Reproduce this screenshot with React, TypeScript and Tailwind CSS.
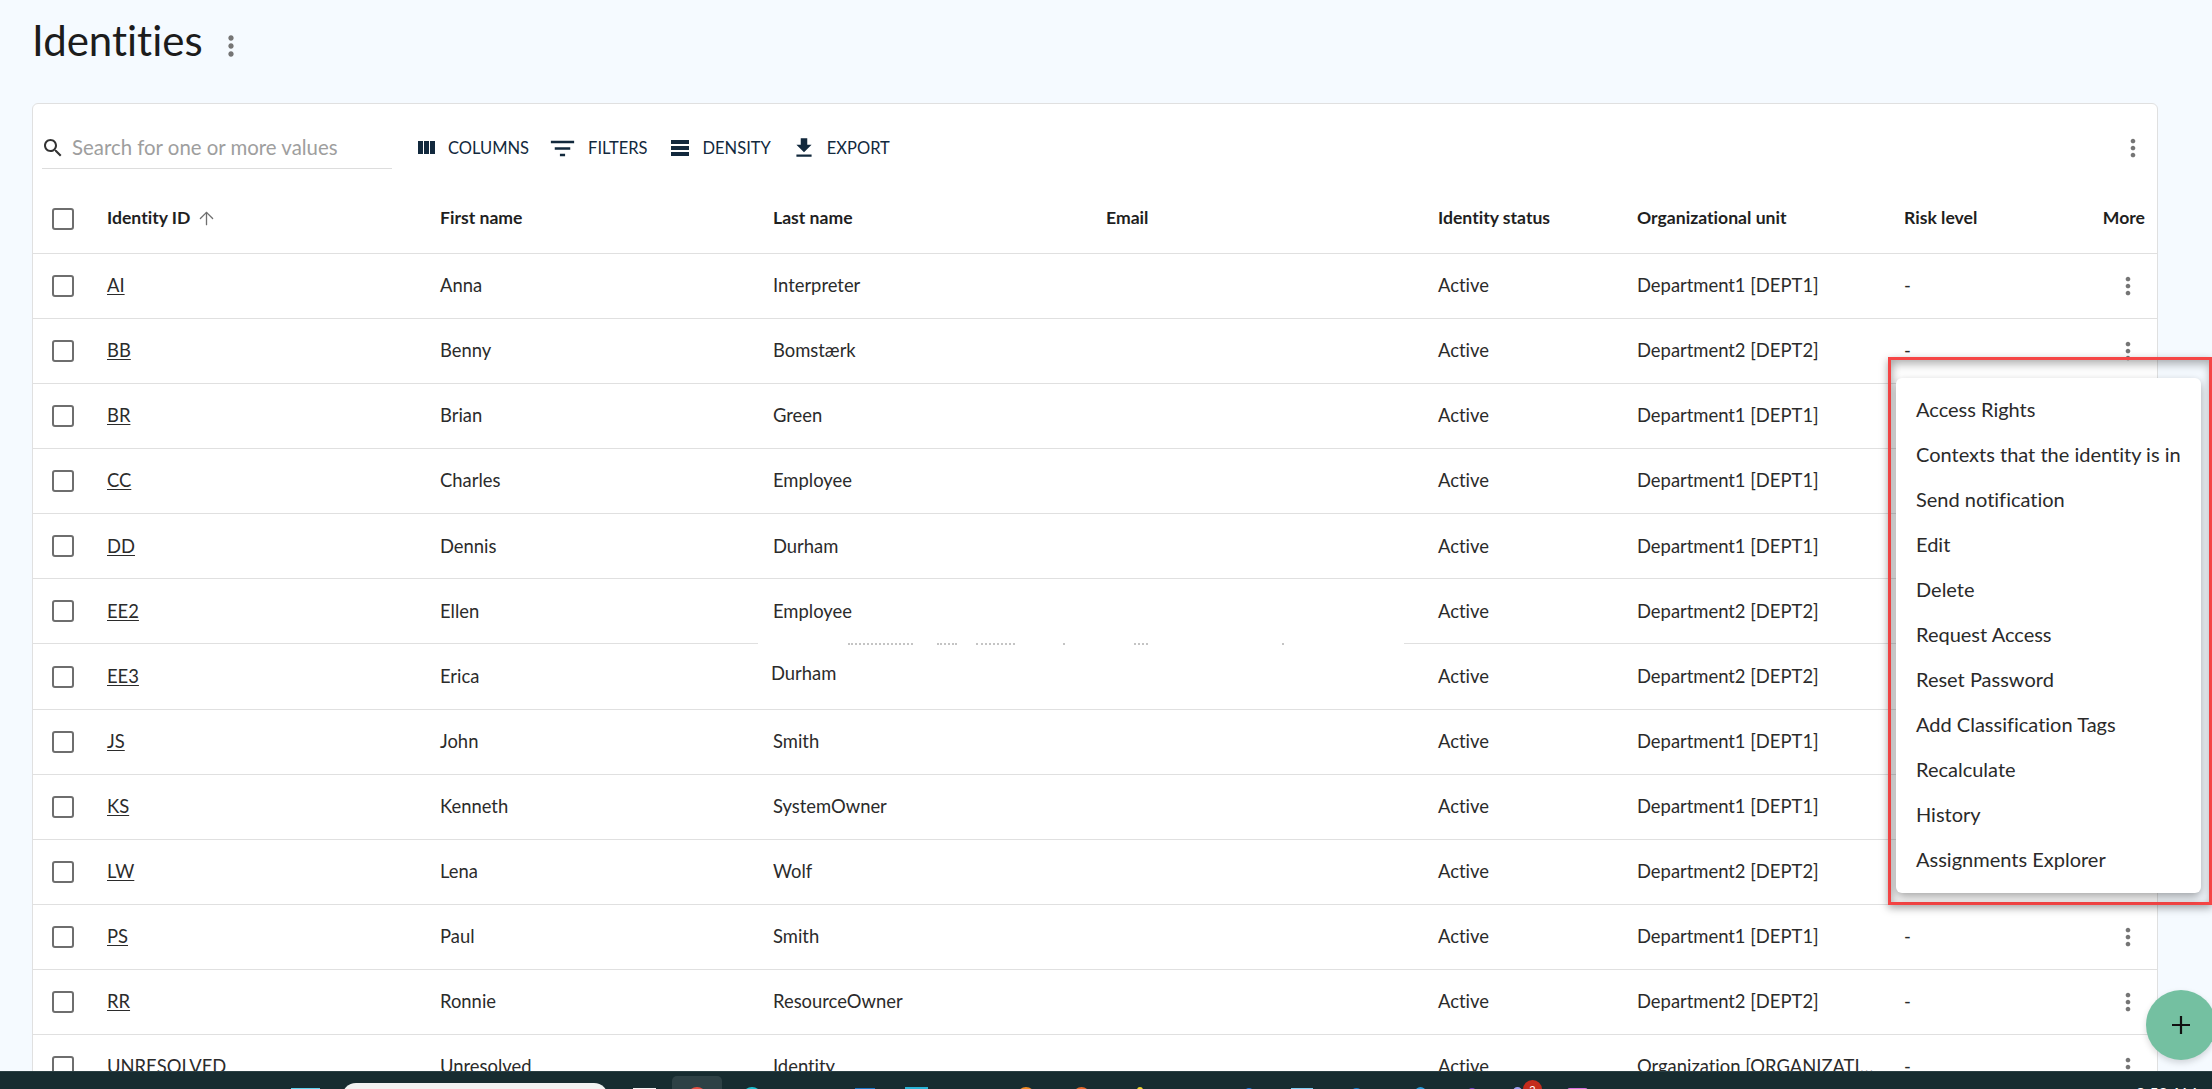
import { ArrowUp } from 'lucide-react';

const FONT = "font-['Lato','Noto_Sans',sans-serif] [font-variant-ligatures:none]";

type Row = { id: string; first: string; last: string; status: string; org: string; link?: boolean };

const rows: Row[] = [
  { id: 'AI', first: 'Anna', last: 'Interpreter', status: 'Active', org: 'Department1 [DEPT1]', link: true },
  { id: 'BB', first: 'Benny', last: 'Bomstærk', status: 'Active', org: 'Department2 [DEPT2]', link: true },
  { id: 'BR', first: 'Brian', last: 'Green', status: 'Active', org: 'Department1 [DEPT1]', link: true },
  { id: 'CC', first: 'Charles', last: 'Employee', status: 'Active', org: 'Department1 [DEPT1]', link: true },
  { id: 'DD', first: 'Dennis', last: 'Durham', status: 'Active', org: 'Department1 [DEPT1]', link: true },
  { id: 'EE2', first: 'Ellen', last: 'Employee', status: 'Active', org: 'Department2 [DEPT2]', link: true },
  { id: 'EE3', first: 'Erica', last: 'Durham', status: 'Active', org: 'Department2 [DEPT2]', link: true },
  { id: 'JS', first: 'John', last: 'Smith', status: 'Active', org: 'Department1 [DEPT1]', link: true },
  { id: 'KS', first: 'Kenneth', last: 'SystemOwner', status: 'Active', org: 'Department1 [DEPT1]', link: true },
  { id: 'LW', first: 'Lena', last: 'Wolf', status: 'Active', org: 'Department2 [DEPT2]', link: true },
  { id: 'PS', first: 'Paul', last: 'Smith', status: 'Active', org: 'Department1 [DEPT1]', link: true },
  { id: 'RR', first: 'Ronnie', last: 'ResourceOwner', status: 'Active', org: 'Department2 [DEPT2]', link: true },
  { id: 'UNRESOLVED', first: 'Unresolved', last: 'Identity', status: 'Active', org: 'Organization [ORGANIZATION]' },
];

const menuItems = [
  'Access Rights',
  'Contexts that the identity is in',
  'Send notification',
  'Edit',
  'Delete',
  'Request Access',
  'Reset Password',
  'Add Classification Tags',
  'Recalculate',
  'History',
  'Assignments Explorer',
];

// bits of the taskbar peeking in at the bottom of the capture
const trayIcons = [
  'ml-[291px] mt-[16px] w-[29px] h-[10px] bg-[#5fd4f0]',
  'ml-[22px] mt-[11px] w-[266px] h-[20px] bg-[#f1f3f2] rounded-t-[14px]',
  'ml-[25px] mt-[16px] w-[23px] h-[10px] bg-[#f4f4f4]',
  'ml-[31px] mt-[15px] w-[20px] h-[20px] bg-[#e53c2e] rounded-full',
  'ml-[35px] mt-[15px] w-[20px] h-[20px] bg-[#1fc4d4] rounded-full',
  'ml-[30px] mt-[17px] w-[13px] h-[10px] bg-[#c9a227]',
  'ml-[50px] mt-[16px] w-[20px] h-[10px] bg-[#1a78c8]',
  'ml-[30px] mt-[15px] w-[23px] h-[10px] bg-[#2ab5d8]',
  'ml-[33px] mt-[17px] w-[17px] h-[10px] bg-[#a89a5a]',
  'ml-[39px] mt-[15px] w-[18px] h-[18px] bg-[#f08a24] rounded-full',
  'ml-[38px] mt-[15px] w-[17px] h-[18px] bg-[#e8682c] rounded-full',
  'ml-[47px] mt-[15px] w-[6px] h-[10px] bg-[#f4d82c] rounded-full',
  'ml-[35px] mt-[17px] w-[14px] h-[10px] bg-[#9aa0a2]',
  'ml-[52px] mt-[16px] w-[10px] h-[10px] bg-[#1f7ae0] rounded-full',
  'ml-[37px] mt-[16px] w-[22px] h-[10px] bg-[#7fd0f5]',
  'ml-[37px] mt-[16px] w-[13px] h-[13px] bg-[#1580d0] rounded-full',
  'ml-[52px] mt-[15px] w-[11px] h-[10px] bg-[#2a9fe0] rounded-t-full',
  'ml-[42px] mt-[16px] w-[8px] h-[8px] bg-[#7a3fc8] rounded-full',
  'ml-[37px] mt-[15px] w-[9px] h-[10px] bg-[#9d9df0] rounded-full',
  'ml-[45px] mt-[16px] w-[21px] h-[10px] bg-[#d66fe0] rounded-t-[3px]',
];

const smudges = [
  'ml-[90px] w-[65px]',
  'ml-[24px] w-[20px]',
  'ml-[19px] w-[39px]',
  'ml-[48px] w-[2px]',
  'ml-[69px] w-[14px]',
  'ml-[134px] w-[2px]',
];

function MoreVert({ size = 28, className = '' }: { size?: number; className?: string }) {
  return (
    <svg width={size} height={size} viewBox="0 0 24 24" fill="#757575" className={className}>
      <path d="M12 8c1.1 0 2-.9 2-2s-.9-2-2-2-2 .9-2 2 .9 2 2 2zm0 2c-1.1 0-2 .9-2 2s.9 2 2 2 2-.9 2-2-.9-2-2-2zm0 6c-1.1 0-2 .9-2 2s.9 2 2 2 2-.9 2-2-.9-2-2-2z" />
    </svg>
  );
}

function Checkbox() {
  return <div className="ml-[19px] w-[22px] h-[22px] rounded-[3px] border-[2.5px] border-[#6e6e6e]" />;
}

function ToolbarButton({ icon, label, className }: { icon: React.ReactNode; label: string; className: string }) {
  return (
    <div className={`flex items-center ${className}`}>
      {icon}
      <span className="text-[16.5px] text-[#12293d] leading-none">{label}</span>
    </div>
  );
}

const gridCols = 'grid grid-cols-[74px_333px_333px_333px_332px_199px_267px_120px_1fr] items-center';

export default function App() {
  return (
    <div className={`relative w-[2212px] h-[1089px] overflow-hidden bg-[#f5faff] ${FONT}`}>
      <main className="h-[1071px] overflow-hidden pl-[32px] pr-[54px]">
        <div className="h-[103px] flex items-start pt-[15px]">
          <h1 className="text-[42px] leading-[50px] font-normal text-[#1c1c1c]">Identities</h1>
          <MoreVert size={32} className="ml-[12px] mt-[15px]" />
        </div>

        <div className="bg-white border border-[#e0e0e0] rounded-[6px]">
          <div className="h-[80px] pt-[8px] flex items-center">
            <div className="ml-[9px] w-[350px] h-[45px] mt-[-4px] border-b border-[#dddddd] flex items-center">
              <svg width="24" height="24" viewBox="0 0 24 24" fill="#333333" className="ml-[-1px] mt-[4px]">
                <path d="M15.5 14h-.79l-.28-.27C15.41 12.59 16 11.11 16 9.5 16 5.91 13.09 3 9.5 3S3 5.91 3 9.5 5.91 16 9.5 16c1.61 0 3.09-.59 4.23-1.57l.27.28v.79l5 4.99L20.49 19l-4.99-5zm-6 0C7.01 14 5 11.99 5 9.5S7.01 5 9.5 5 14 7.01 14 9.5 11.99 14 9.5 14z" />
              </svg>
              <span className="ml-[7px] mt-[4px] text-[20.4px] text-[#9e9e9e]">Search for one or more values</span>
            </div>

            <ToolbarButton
              className="ml-[22px]"
              label="COLUMNS"
              icon={
                <svg width="24" height="24" viewBox="0 0 24 24" fill="#12293d" className="mr-[10px]">
                  <path d="M10 18h5V5h-5v13zm-6 0h5V5H4v13zM16 5v13h5V5h-5z" />
                </svg>
              }
            />
            <ToolbarButton
              className="ml-[18px]"
              label="FILTERS"
              icon={
                <svg width="31" height="31" viewBox="0 0 24 24" fill="#12293d" className="mr-[10px]">
                  <path d="M10 18h4v-2h-4v2zM3 6v2h18V6H3zm3 7h12v-2H6v2z" />
                </svg>
              }
            />
            <ToolbarButton
              className="ml-[23px]"
              label="DENSITY"
              icon={
                <svg width="18" height="16" viewBox="0 0 18 16" fill="#12293d" className="mr-[14px]">
                  <path d="M0 0h18v4H0zM0 6h18v4H0zM0 12h18v4H0z" />
                </svg>
              }
            />
            <ToolbarButton
              className="ml-[20px]"
              label="EXPORT"
              icon={
                <svg width="26" height="26" viewBox="0 0 24 24" fill="#12293d" className="mr-[10px]">
                  <path d="M19 9h-4V3H9v6H5l7 7 7-7zM5 18v2h14v-2H5z" />
                </svg>
              }
            />
            <div className="ml-auto mr-[10px] flex">
              <MoreVert />
            </div>
          </div>

          <div className={`${gridCols} h-[70px] border-b border-[#e0e0e0] text-[17.6px] font-bold text-[#1f1f1f]`}>
            <Checkbox />
            <div className="flex items-center">
              Identity ID
              <ArrowUp size={21} strokeWidth={1.5} color="#6f6f6f" className="ml-[6px]" />
            </div>
            <div>First name</div>
            <div>Last name</div>
            <div>Email</div>
            <div>Identity status</div>
            <div>Organizational unit</div>
            <div>Risk level</div>
            <div className="text-right pr-[12px]">More</div>
          </div>

          {rows.map((r) => (
            <div key={r.id} className={`${gridCols} h-[65.08px] border-b border-[#e0e0e0] text-[18.4px] text-[#2b2b2b]`}>
              <Checkbox />
              <div className={r.link ? 'underline underline-offset-2' : ''}>{r.id}</div>
              <div>{r.first}</div>
              <div className={r.id === 'EE3' ? 'ml-[-2px] mt-[-5px]' : ''}>{r.last}</div>
              <div />
              <div>{r.status}</div>
              <div className="truncate pr-[26px]">{r.org}</div>
              <div>-</div>
              <div className="flex justify-end pr-[15px]">
                <MoreVert />
              </div>
            </div>
          ))}
        </div>
      </main>

      <div className="h-[18px] bg-[#172c30] border-t border-[#2a3f43] flex items-start overflow-hidden relative">
        {trayIcons.map((c) => (
          <div key={c} className={`shrink-0 ${c}`} />
        ))}
        <div className="ml-auto mr-[15px] mt-[13px] text-[16px] leading-none text-white whitespace-nowrap">9:52 AM</div>
      </div>

      {/* active tab tile behind the red icon + unread badge */}
      <div className="absolute left-[672px] top-[1076px] w-[50px] h-[13px] rounded-t-[5px] bg-white/10" />
      <div className="absolute left-[1523px] top-[1080px] w-[19px] h-[19px] rounded-full bg-[#c42b1c] text-white text-[11px] leading-[19px] text-center">2</div>

      {/* wiped strip from the screenshot edit */}
      <div className="absolute left-[758px] top-[641px] w-[646px] h-[6px] bg-white flex items-center">
        {smudges.map((c) => (
          <div key={c} className={`border-t-2 border-dotted border-[#c4c4c4] ${c}`} />
        ))}
      </div>

      {/* annotation box with the open row menu */}
      <div className="absolute left-[1888px] top-[357px] w-[324px] h-[548px] border-[3px] border-[#f54545] shadow-[0_3px_8px_rgba(0,0,0,0.35),inset_0_5px_8px_rgba(0,0,0,0.25),inset_4px_0_6px_rgba(0,0,0,0.1)] pt-[18px] pl-[5px] pr-[8px]">
        <div className="h-[515px] bg-white rounded-[6px] shadow-[0_4px_10px_rgba(0,0,0,0.35)] pt-[8.5px]">
          {menuItems.map((item) => (
            <div key={item} className="h-[45px] pl-[20px] flex items-center text-[20px] text-[#2a2a2a] whitespace-nowrap">
              {item}
            </div>
          ))}
        </div>
      </div>

      <button className="absolute left-[2146px] top-[990px] w-[70px] h-[70px] rounded-full bg-[#74c0a1] flex items-center justify-center shadow-[0_3px_6px_rgba(0,0,0,0.15)]">
        <svg width="20" height="20" viewBox="0 0 20 20" stroke="#111111" strokeWidth="2.2">
          <path d="M10 1v18M1 10h18" />
        </svg>
      </button>
    </div>
  );
}
